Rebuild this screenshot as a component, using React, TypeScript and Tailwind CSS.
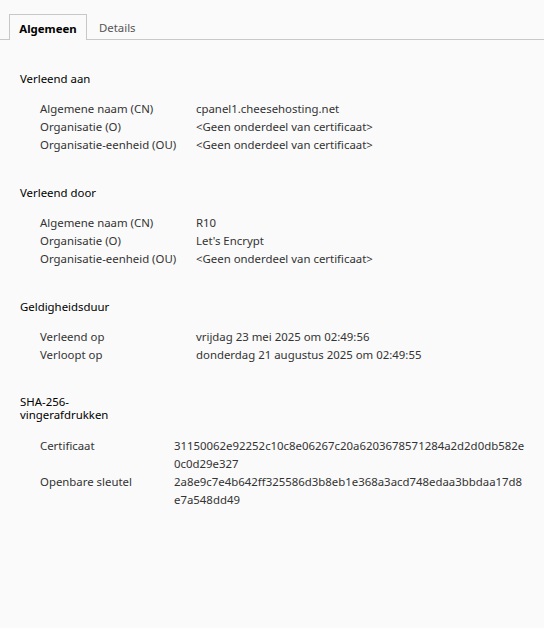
const issuedTo = [
  ['Algemene naam (CN)', 'cpanel1.cheesehosting.net'],
  ['Organisatie (O)', '<Geen onderdeel van certificaat>'],
  ['Organisatie-eenheid (OU)', '<Geen onderdeel van certificaat>'],
];

const issuedBy = [
  ['Algemene naam (CN)', 'R10'],
  ['Organisatie (O)', "Let's Encrypt"],
  ['Organisatie-eenheid (OU)', '<Geen onderdeel van certificaat>'],
];

const validity = [
  ['Verleend op', 'vrijdag 23 mei 2025 om 02:49:56'],
  ['Verloopt op', 'donderdag 21 augustus 2025 om 02:49:55'],
];

const fingerprints = [
  ['Certificaat', ['31150062e92252c10c8e06267c20a6203678571284a2d2d0db582e', '0c0d29e327']],
  ['Openbare sleutel', ['2a8e9c7e4b642ff325586d3b8eb1e368a3acd748edaa3bbdaa17d8', 'e7a548dd49']],
] as const;

function Section({ title, rows }: { title: string; rows: string[][] }) {
  return (
    <section className="mb-[29px]">
      <h2 className="mb-[12px] h-[19px] pt-px leading-[18px] text-[#000]">{title}</h2>
      <div className="pl-5">
        {rows.map(([label, value]) => (
          <div key={label} className="flex h-[18px] leading-[18px] text-[#333]">
            <span className="w-[156px] shrink-0">{label}</span>
            <span>{value}</span>
          </div>
        ))}
      </div>
    </section>
  );
}

export default function App() {
  return (
    <div
      className="h-[628px] w-[544px] bg-[#fafafa] text-[11.4px] text-[#222]"
      style={{ fontFamily: '"Segoe UI", "Noto Sans", sans-serif' }}
    >
      <div className="flex h-[40px] items-end border-b border-[#c8c8c8] pl-[9px]">
        <div className="-mb-px flex h-[26px] w-[78px] items-center justify-center border border-b-0 border-[#c8c8c8] bg-[#fafafa] pt-[2px] font-bold text-black">
          Algemeen
        </div>
        <div className="flex h-[25px] items-center px-3 pt-[2px] text-[#555]">Details</div>
      </div>

      <div className="px-5 pt-[29px]">
        <Section title="Verleend aan" rows={issuedTo} />
        <Section title="Verleend door" rows={issuedBy} />
        <Section title="Geldigheidsduur" rows={validity} />

        <section className="pt-[2px]">
          <h2 className="mb-[16px] leading-[13px] text-black">
            SHA-256-
            <br />
            vingerafdrukken
          </h2>
          <div className="pl-5">
            {fingerprints.map(([label, lines]) => (
              <div key={label} className="flex leading-[18px] text-[#333]">
                <span className="w-[134px] shrink-0">{label}</span>
                <span>
                  {lines[0]}
                  <br />
                  {lines[1]}
                </span>
              </div>
            ))}
          </div>
        </section>
      </div>
    </div>
  );
}
